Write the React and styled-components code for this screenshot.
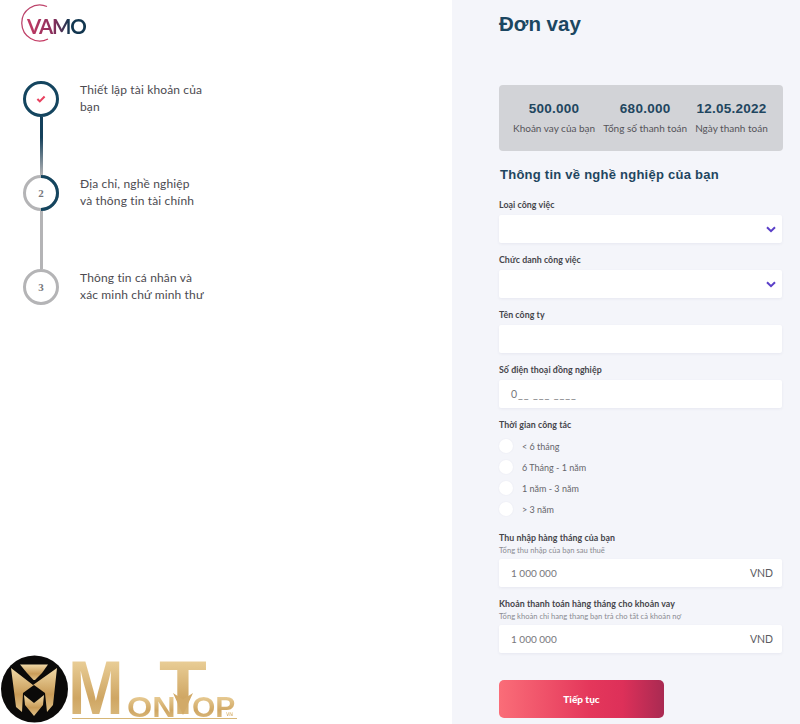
import React from 'react';
import styled, { createGlobalStyle } from 'styled-components';

const Global = createGlobalStyle`
  html, body { margin: 0; padding: 0; background: #fff; }
  body { width: 800px; height: 724px; overflow: hidden; font-family: "Lato", "Liberation Sans", sans-serif; }
  * { box-sizing: border-box; }
`;

const Page = styled.div`
  position: relative;
  display: grid;
  grid-template-columns: 452px 348px;
  width: 800px;
  height: 724px;
  overflow: hidden;
`;

const Sidebar = styled.aside`
  background: #fff;
  padding: 4px 0 0 20px;
`;

const LogoWrap = styled.div`
  position: relative;
  width: 70px;
  height: 40px;
  margin-bottom: 37px;
`;

const LogoArc = styled.svg`
  position: absolute;
  left: 0;
  top: 0;
`;

const LogoText = styled.span`
  position: absolute;
  left: 7px;
  top: 9px;
  font-size: 20.5px;
  line-height: 26px;
  font-weight: 700;
  letter-spacing: -1.1px;
  background: linear-gradient(90deg, #c43a63 0%, #8a2f5c 45%, #12364f 72%);
  -webkit-background-clip: text;
  background-clip: text;
  color: transparent;
`;

const Steps = styled.ol`
  list-style: none;
  margin: 0;
  padding: 0 0 0 3px;
`;

const Step = styled.li`
  display: grid;
  grid-template-columns: 36px 1fr;
  column-gap: 21px;
  height: ${p => p.$last ? '36px' : '94px'};
`;

const Track = styled.div`
  display: flex;
  flex-direction: column;
  align-items: center;
`;

const Circle = styled.div`
  position: relative;
  flex: none;
  width: 36px;
  height: 36px;
  border-radius: 50%;
  border: 3px solid ${p => p.$done ? '#14455f' : '#b4b4b6'};
  background: #fff;
  display: flex;
  align-items: center;
  justify-content: center;
  font-family: "Liberation Serif", serif;
  font-weight: 700;
  font-size: 11px;
  color: #77777b;
`;

const HalfRing = styled.svg`
  position: absolute;
  left: -3px;
  top: -3px;
`;

const Connector = styled.div`
  flex: none;
  width: 3px;
  height: 58px;
  background: ${p => p.$fade ? 'linear-gradient(180deg, #14405b 0%, #14405b 35%, #b4b4b6 100%)' : '#b4b4b6'};
`;

const StepText = styled.p`
  margin: 0;
  font-size: 12px;
  line-height: 17px;
  letter-spacing: 0.15px;
  white-space: nowrap;
  color: #4c4a50;
`;

const Main = styled.main`
  background: #f4f5fa;
  padding: 0 17px 0 47px;
`;

const Title = styled.h1`
  margin: 0;
  height: 85px;
  padding-top: 12px;
  font-family: "Liberation Sans", sans-serif;
  font-size: 20.5px;
  line-height: 24px;
  font-weight: 700;
  color: #1b4661;
`;

const Summary = styled.section`
  display: flex;
  gap: 8px;
  height: 66px;
  padding: 15px 0 0 14px;
  background: #d2d3d7;
  border-radius: 4px;
`;

const SummaryItem = styled.div`
  display: flex;
  flex-direction: column;
  align-items: center;
`;

const SummaryValue = styled.strong`
  font-family: "Liberation Sans", sans-serif;
  font-size: 13.5px;
  line-height: 18px;
  letter-spacing: 0.25px;
  color: #1f4660;
`;

const SummaryLabel = styled.span`
  margin-top: 3px;
  font-size: 10px;
  line-height: 14px;
  white-space: nowrap;
  color: #55545a;
`;

const Section = styled.h2`
  margin: 16px 0 0 1px;
  height: 32px;
  font-family: "Liberation Sans", sans-serif;
  font-size: 13px;
  line-height: 16px;
  font-weight: 700;
  letter-spacing: 0.25px;
  color: #1f4660;
`;

const Field = styled.div`
  margin-bottom: ${p => p.$mb ?? 11}px;
`;

const Label = styled.div`
  height: 16px;
  font-size: 8.8px;
  line-height: 11px;
  font-weight: 700;
  color: #46454b;
  letter-spacing: 0.05px;
`;

const Hint = styled.div`
  height: 9px;
  margin-top: -2px;
  margin-bottom: 4px;
  font-size: 7.6px;
  line-height: 9px;
  color: #8b8b92;
`;

const Box = styled.div`
  display: flex;
  align-items: center;
  justify-content: space-between;
  height: 28px;
  margin-right: 1px;
  padding: 0 6px 0 12px;
  background: #fff;
  border-radius: 2px;
  box-shadow: 0 1px 3px rgba(60, 60, 110, 0.07);
  font-size: 10px;
  color: #77777c;
`;

const Mask = styled.span`
  letter-spacing: 0.9px;
  font-size: 10.5px;
`;

const Unit = styled.span`
  font-size: 10.5px;
  color: #5b5b61;
  margin-right: 3px;
`;

const Chevron = styled.svg`
  flex: none;
  margin-top: 1px;
`;

const Radios = styled.div`
  display: grid;
  row-gap: 7px;
  margin-top: 4px;
  margin-bottom: 16px;
`;

const RadioRow = styled.label`
  display: flex;
  align-items: center;
  gap: 9px;
  height: 14px;
  font-size: 9px;
  color: #66656b;
`;

const RadioDot = styled.span`
  width: 14px;
  height: 14px;
  border-radius: 50%;
  background: #fff;
  box-shadow: 0 0 2px rgba(60, 60, 110, 0.08);
`;

const Button = styled.button`
  display: block;
  width: 165px;
  height: 38px;
  margin-top: 27px;
  border: 0;
  border-radius: 5px;
  background: linear-gradient(90deg, #fa6d78 0%, #e4375b 55%, #dd3059 75%, #a92a52 100%);
  color: #fff;
  font-family: "Lato", sans-serif;
  font-size: 10px;
  font-weight: 900;
`;

const Watermark = styled.div`
  position: absolute;
  left: 1px;
  top: 655px;
  width: 236px;
  height: 68px;
  display: flex;
  align-items: flex-start;
`;

const Brand = styled.div`
  position: relative;
  margin-left: 3px;
  width: 165px;
  height: 64px;
  border-bottom: 1px solid #d6b676;
`;

const GoldText = styled.span`
  position: absolute;
  left: ${p => p.$x}px;
  top: ${p => p.$y}px;
  font-family: "Liberation Sans", sans-serif;
  font-weight: 700;
  font-size: ${p => p.$size}px;
  line-height: 0.9;
  transform-origin: left top;
  transform: scaleX(${p => p.$sx ?? 1});
  background: linear-gradient(180deg, #eed5a0 0%, #cfa663 65%, #dcbc80 100%);
  -webkit-background-clip: text;
  background-clip: text;
  color: transparent;
`;

const Arrow = styled.span`
  position: absolute;
  left: 101px;
  top: 38px;
  width: 20px;
  height: 22px;
  background: #d2aa68;
  clip-path: polygon(0 0, 50% 30%, 100% 0, 50% 100%);
`;

const Check = () => (
  <svg width="10" height="8" viewBox="0 0 12 10" aria-hidden="true">
    <path d="M1.5 5 L4.5 8 L10.5 2" fill="none" stroke="#e8415f" strokeWidth="2.6" />
  </svg>
);

const Down = () => (
  <Chevron width="10" height="7" viewBox="0 0 10 7" aria-hidden="true">
    <path d="M1 1.2 L5 5.2 L9 1.2" fill="none" stroke="#5a3fc8" strokeWidth="2" />
  </Chevron>
);

const Emblem = () => (
  <svg width="68" height="68" viewBox="0 0 68 68" aria-hidden="true">
    <defs>
      <linearGradient id="gold" x1="0" y1="0" x2="0" y2="1">
        <stop offset="0" stopColor="#f0d9a6" />
        <stop offset="0.6" stopColor="#c99c58" />
        <stop offset="1" stopColor="#e0c187" />
      </linearGradient>
    </defs>
    <circle cx="33.5" cy="34" r="33.5" fill="#0b0a09" />
    <polygon fill="url(#gold)" points="19,9.5 47,9.5 41,18 34,25 32.5,25 26,18" />
    <polygon fill="url(#gold)" points="10,13 32,30 56,13 52,50 46,57 44,38 33,30 22,38 21,57 15,52" />
    <polygon fill="url(#gold)" points="23,40 33,48 43,40 42,50 33,61 24,50" />
  </svg>
);

const radios = ['< 6 tháng', '6 Tháng - 1 năm', '1 năm - 3 năm', '> 3 năm'];

export default function App() {
  return (
    <Page>
      <Global />
      <Sidebar>
        <LogoWrap>
          <LogoArc width="44" height="40" viewBox="0 0 44 40" aria-hidden="true">
            <defs>
              <linearGradient id="arc" x1="0" y1="0" x2="1" y2="1">
                <stop offset="0" stopColor="#b9496f" />
                <stop offset="1" stopColor="#c73a63" />
              </linearGradient>
            </defs>
            <path d="M 27 2.5 A 18 18 0 1 0 28 35" fill="none" stroke="url(#arc)" strokeWidth="1.3" />
          </LogoArc>
          <LogoText>VAMO</LogoText>
        </LogoWrap>
        <Steps>
          <Step>
            <Track>
              <Circle $done><Check /></Circle>
              <Connector $fade />
            </Track>
            <StepText>Thiết lập tài khoản của<br />bạn</StepText>
          </Step>
          <Step>
            <Track>
              <Circle>
                <HalfRing width="36" height="36" viewBox="0 0 36 36" aria-hidden="true">
                  <path d="M 18 1.5 A 16.5 16.5 0 0 1 18 34.5" fill="none" stroke="#14455f" strokeWidth="3" />
                </HalfRing>
                2
              </Circle>
              <Connector />
            </Track>
            <StepText>Địa chỉ, nghề nghiệp<br />và thông tin tài chính</StepText>
          </Step>
          <Step $last>
            <Track>
              <Circle>3</Circle>
            </Track>
            <StepText>Thông tin cá nhân và<br />xác minh chứ minh thư</StepText>
          </Step>
        </Steps>
      </Sidebar>
      <Main>
        <Title>Đơn vay</Title>
        <Summary>
          <SummaryItem><SummaryValue>500.000</SummaryValue><SummaryLabel>Khoản vay của bạn</SummaryLabel></SummaryItem>
          <SummaryItem><SummaryValue>680.000</SummaryValue><SummaryLabel>Tổng số thanh toán</SummaryLabel></SummaryItem>
          <SummaryItem><SummaryValue>12.05.2022</SummaryValue><SummaryLabel>Ngày thanh toán</SummaryLabel></SummaryItem>
        </Summary>
        <Section>Thông tin về nghề nghiệp của bạn</Section>
        <Field>
          <Label>Loại công việc</Label>
          <Box><span /><Down /></Box>
        </Field>
        <Field>
          <Label>Chức danh công việc</Label>
          <Box><span /><Down /></Box>
        </Field>
        <Field>
          <Label>Tên công ty</Label>
          <Box />
        </Field>
        <Field>
          <Label>Số điện thoại đồng nghiệp</Label>
          <Box><Mask>0__ ___ ____</Mask></Box>
        </Field>
        <Field $mb={0}>
          <Label>Thời gian công tác</Label>
          <Radios>
            {radios.map(r => (
              <RadioRow key={r}><RadioDot />{r}</RadioRow>
            ))}
          </Radios>
        </Field>
        <Field>
          <Label>Thu nhập hàng tháng của bạn</Label>
          <Hint>Tổng thu nhập của bạn sau thuế</Hint>
          <Box>1 000 000<Unit>VND</Unit></Box>
        </Field>
        <Field $mb={0}>
          <Label>Khoản thanh toán hàng tháng cho khoản vay</Label>
          <Hint>Tổng khoản chi hang thang bạn trả cho tất cả khoản nợ</Hint>
          <Box>1 000 000<Unit>VND</Unit></Box>
        </Field>
        <Button>Tiếp tục</Button>
      </Main>
      <Watermark>
        <Emblem />
        <Brand>
          <GoldText $x={-4} $y={-1} $size={76} $sx={0.88}>M</GoldText>
          <GoldText $x={87} $y={-1} $size={76} $sx={1.03}>T</GoldText>
          <Arrow />
          <GoldText $x={55} $y={38} $size={30} $sx={1.08}>ON</GoldText>
          <GoldText $x={120} $y={38} $size={30}>OP</GoldText>
          <GoldText $x={154} $y={57} $size={5}>VN</GoldText>
        </Brand>
      </Watermark>
    </Page>
  );
}
